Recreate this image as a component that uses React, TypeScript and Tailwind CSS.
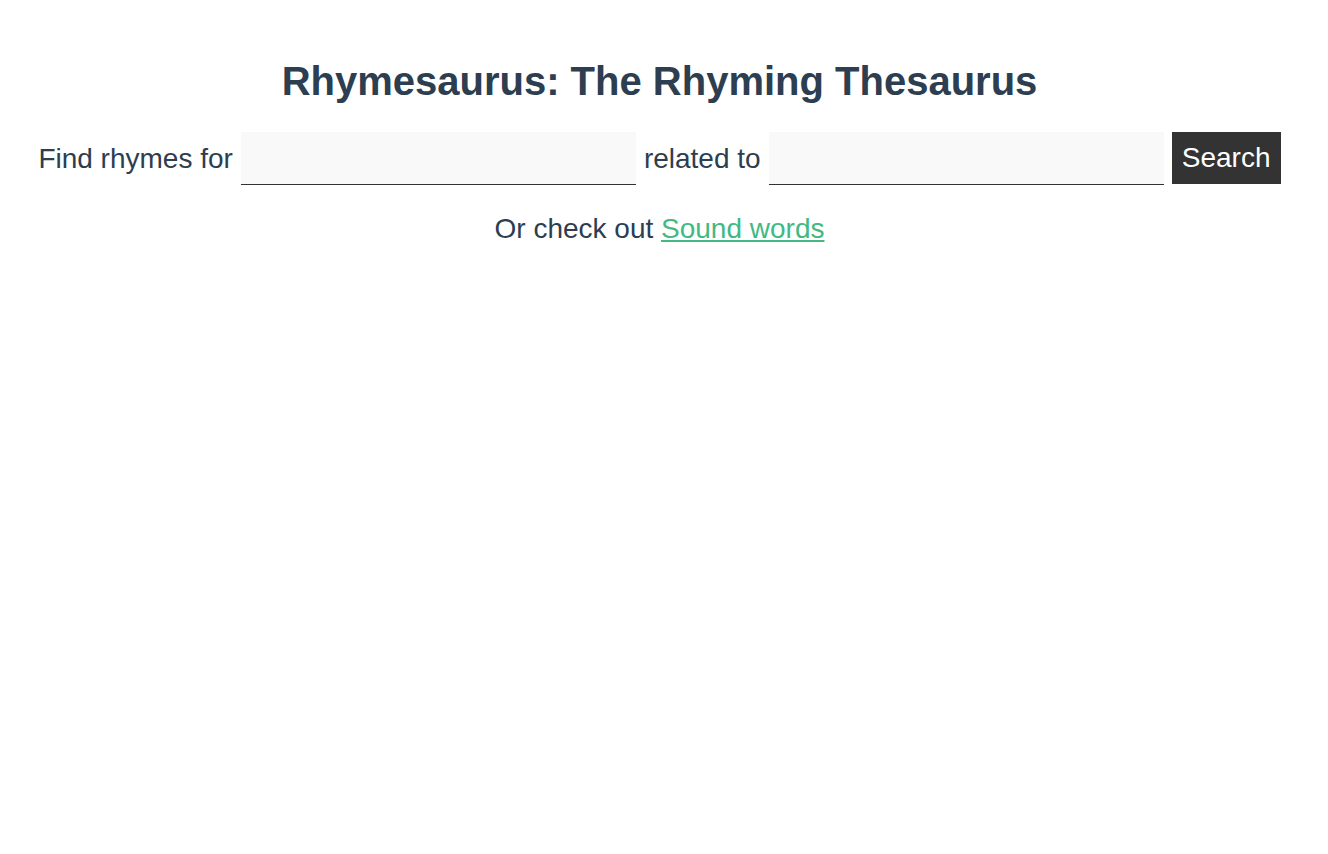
export default function App() {
  return (
    <div
      className="min-h-screen bg-white text-[#2c3e50] pr-[9px]"
      style={{ fontFamily: '"Liberation Sans", Arial, sans-serif' }}
    >
      <h1 className="pt-[56px] text-center text-[40px] leading-[50px] font-bold">
        Rhymesaurus: The Rhyming Thesaurus
      </h1>

      {/* Search row */}
      <form
        className="mt-[26px] flex items-center justify-center gap-2 text-[28px]"
        onSubmit={(e) => e.preventDefault()}
      >
        <label htmlFor="rhyme">Find rhymes for</label>
        <input
          id="rhyme"
          type="text"
          className="h-[53px] w-[395px] border-0 border-b border-[#333] bg-[#f9f9f9] px-2 text-[28px] outline-none"
        />
        <label htmlFor="related">related to</label>
        <input
          id="related"
          type="text"
          className="h-[53px] w-[395px] border-0 border-b border-[#333] bg-[#f9f9f9] px-2 text-[28px] outline-none"
        />
        <button
          type="submit"
          className="h-[52px] w-[109px] self-start bg-[#333] text-[28px] text-white"
        >
          Search
        </button>
      </form>

      <p className="mt-[26px] text-center text-[28px] leading-[36px]">
        Or check out{' '}
        <a href="#" className="text-[#42b983] underline">
          Sound words
        </a>
      </p>
    </div>
  );
}
